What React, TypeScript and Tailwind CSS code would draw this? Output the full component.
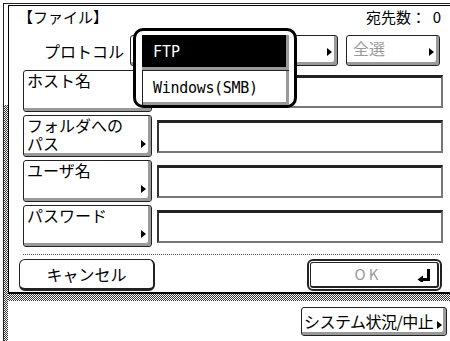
const jp = "font-['Noto_Sans_CJK_JP','Noto_Sans',sans-serif]";
const checker =
  "bg-[image:repeating-conic-gradient(#333_0%_25%,#fff_0%_50%)] bg-[length:2px_2px]";

function Arrow() {
  return (
    <span className="block h-0 w-0 border-y-[4px] border-l-[5px] border-y-transparent border-l-black" />
  );
}

function LabelButton({ lines }: { lines: string[] }) {
  return (
    <div className="flex h-[42px] w-[129px] justify-between rounded-[3px] border border-[#222] pl-[3px] pr-[5px] shadow-[inset_-3px_-3px_0_#9a9a9a]">
      <p className="text-[16px] leading-[18px] text-black">
        {lines.map((l, i) => (
          <span key={l}>
            {i > 0 && <br />}
            {l}
          </span>
        ))}
      </p>
      <div className="mb-[8px] self-end">
        <Arrow />
      </div>
    </div>
  );
}

function Field({ lines }: { lines: string[] }) {
  return (
    <div className="flex items-start gap-[5px]">
      <LabelButton lines={lines} />
      <div className="mt-[5px] h-[33px] w-[286px] border-2 border-[#777] border-l-[#333] border-t-[3px] border-t-[#222] bg-white" />
    </div>
  );
}

function ReturnIcon() {
  return (
    <svg width="14" height="14" viewBox="0 0 14 14">
      <path d="M11.5 1 V11.5 H5" fill="none" stroke="#000" strokeWidth="3" />
      <path d="M0.5 11.5 L6 7.5 L6 15.5 Z" fill="#000" />
    </svg>
  );
}

export default function App() {
  return (
    <div className={`relative h-[341px] w-[450px] overflow-hidden bg-white pl-[3px] pt-[3px] ${jp}`}>
      <div className="flex h-full border-l border-t border-[#222]">
        <div className="flex w-[4px] shrink-0 flex-col">
          <div className="h-[101px] bg-white" />
          <div className={`flex-1 ${checker}`} />
        </div>

        <div className="flex w-[460px] shrink-0 flex-col pt-[1px]">
          <div className="border-b-2 border-l border-t border-black bg-white">
            <div className="w-[434px] pb-[1px]">
              <div className="flex h-[22px] items-center justify-between pl-[9px] pr-[2px] text-[15px] text-black">
                <span>【ファイル】</span>
                <span>宛先数：&nbsp; 0</span>
              </div>

              <div className="mt-[7px] flex h-[31px] items-center pl-[35px]">
                <span className="w-[86px] text-[16px] text-black">プロトコル</span>
                <div className="flex h-[31px] w-[208px] items-end justify-end rounded-[3px] border border-[#222] pb-[9px] pr-[5px] shadow-[inset_-3px_-3px_0_#9a9a9a]">
                  <Arrow />
                </div>
                <div className="ml-[8px] flex h-[31px] w-[94px] justify-between rounded-[3px] border border-[#222] pl-[6px] pr-[5px] shadow-[inset_-3px_-3px_0_#9a9a9a]">
                  <span className="mt-[4px] text-[16px] leading-[17px] text-[#999]">全選</span>
                  <div className="mb-[9px] self-end">
                    <Arrow />
                  </div>
                </div>
              </div>

              <div className="mt-[4px] flex flex-col gap-[3px] pl-[14px]">
                <Field lines={["ホスト名"]} />
                <Field lines={["フォルダへの", "パス"]} />
                <Field lines={["ユーザ名"]} />
                <Field lines={["パスワード"]} />
              </div>

              <div className="ml-[14px] mr-[3px] mt-[7px] border-t border-dotted border-[#555]" />

              <div className="mt-[4px] flex h-[32px] items-stretch justify-between pl-[10px] pr-[1px]">
                <div className="flex w-[136px] items-center justify-center rounded-[6px] border border-b-[3px] border-r-[2px] border-[#222] text-[16px] text-black">
                  キャンセル
                </div>
                <div className="w-[135px] rounded-[6px] border-2 border-[#222] p-[1px]">
                  <div className="flex h-full items-center rounded-[3px] border border-b-2 border-r-2 border-[#222] pl-[8px] pr-[6px]">
                    <span className="flex-1 text-center text-[15px] tracking-[3px] text-[#9a9a9a]">OK</span>
                    <ReturnIcon />
                  </div>
                </div>
              </div>
            </div>
          </div>

          <div className={`h-[7px] ${checker}`} />

          <div className="flex-1 bg-white pl-[293px] pt-[6px]">
            <div className="flex h-[29px] w-[146px] justify-between rounded-[3px] border border-[#222] pl-[2px] pr-[4px] shadow-[inset_-3px_-3px_0_#9a9a9a]">
              <span className="mt-[3px] text-[16px] leading-[20px] tracking-[-0.5px] text-black">システム状況/中止</span>
              <div className="mb-[6px] self-end">
                <Arrow />
              </div>
            </div>
          </div>
        </div>
      </div>

      <div className="absolute left-[133px] top-[28px] h-[80px] w-[164px] rounded-[10px] border-[3px] border-black bg-white pl-[6px] pr-[2px] pt-[4px]">
        <div className="flex h-[35px] w-[147px] items-center bg-black pl-[11px] shadow-[inset_-3px_-3px_0_#9a9a9a]">
          <span className="font-['DejaVu_Sans_Mono',monospace] text-[15px] text-white">FTP</span>
        </div>
        <div className="flex h-[35px] w-[147px] items-center border-l border-t border-[#222] pl-[10px] shadow-[inset_-3px_-3px_0_#9a9a9a]">
          <span className="font-['DejaVu_Sans_Mono',monospace] text-[15px] tracking-[-0.3px] text-black">Windows(SMB)</span>
        </div>
      </div>
    </div>
  );
}
